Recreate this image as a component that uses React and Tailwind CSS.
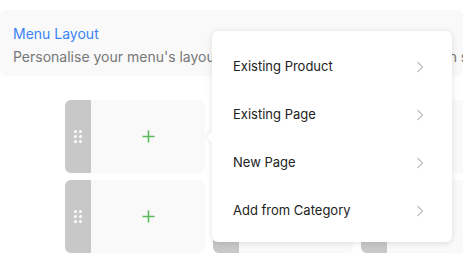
import React from 'react';

const items = ['Existing Product', 'Existing Page', 'New Page', 'Add from Category'];

const Handle = () => (
  <div className="flex w-[26px] shrink-0 items-center justify-center rounded-l-md bg-[#c8c8c8]">
    <div className="grid grid-cols-2 gap-x-[2px] gap-y-[2px]">
      {[0, 1, 2, 3, 4, 5].map((i) => (
        <span key={i} className="block h-[3px] w-[3px] rounded-full bg-white" />
      ))}
    </div>
  </div>
);

const Cell = () => (
  <div className="flex h-[73px] w-[140px] shrink-0 rounded-md bg-[#f9f9f9]">
    <Handle />
    <div className="flex flex-1 items-center justify-center">
      <svg width="13" height="13" viewBox="0 0 13 13">
        <path d="M6.5 0.5v12M0.5 6.5h12" stroke="#5cb85c" strokeWidth="1.6" />
      </svg>
    </div>
  </div>
);

const Chevron = () => (
  <svg width="8" height="12" viewBox="0 0 8 12" fill="none">
    <path d="M1.5 1l5 5-5 5" stroke="#c4c4c4" strokeWidth="1.5" />
  </svg>
);

export default function App() {
  return (
    <div className="relative h-[256px] w-[463px] overflow-hidden bg-white font-['Inter',sans-serif]">
      <div className="mt-[10px] rounded-md bg-[#f9f9f9] px-[13px] pb-[9px] pt-[13px]">
        <div className="text-[14px] leading-[21px] text-[#3b82f6]">Menu Layout</div>
        <div className="mt-[3px] whitespace-nowrap text-[14px] leading-[20px] text-[#777777]">
          Personalise your menu's layout by adding items and arranging it on screen
        </div>
      </div>

      <div className="ml-[65px] mt-[24px] flex flex-col gap-[7px]">
        {[0, 1].map((r) => (
          <div key={r} className="flex gap-[8px]">
            <Cell />
            <Cell />
            <Cell />
          </div>
        ))}
      </div>

      <div className="absolute left-[212px] top-[31px] w-[240px] rounded-md bg-white pb-[7px] pt-[12px] shadow-[0_1px_6px_rgba(0,0,0,0.12)]">
        <div className="absolute left-[-4px] top-[102px] h-[8px] w-[8px] rotate-45 bg-white shadow-[-1px_1px_2px_rgba(0,0,0,0.06)]" />
        {items.map((label) => (
          <div key={label} className="relative flex h-[48px] items-center justify-between pl-[21px] pr-[28px]">
            <span className="text-[13px] text-[#222222]">{label}</span>
            <Chevron />
          </div>
        ))}
      </div>
    </div>
  );
}
